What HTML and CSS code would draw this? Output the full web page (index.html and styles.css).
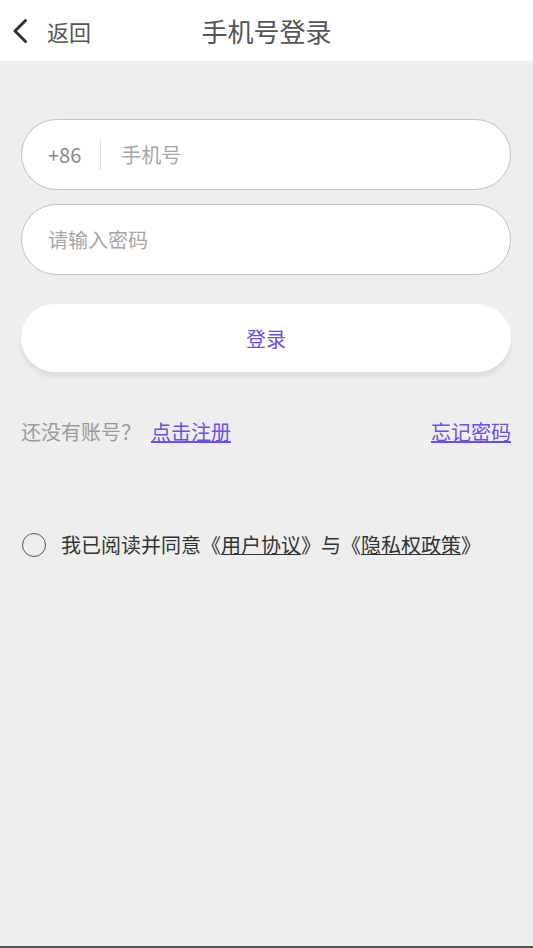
FILE: index.html
```html
<!DOCTYPE html>
<html lang="zh-CN">
<head>
    <meta charset="UTF-8">
    <meta name="viewport" content="width=device-width, initial-scale=1.0">
    <title>手机号登录</title>
    <link rel="stylesheet" href="styles.css">
</head>
<body>
<div class="topbar">
    <div class="back">
        <svg class="chevron" width="18" height="26" viewBox="0 0 18 26">
            <path d="M14.5 2.5 L4 13 L14.5 23.5" fill="none" stroke="#333" stroke-width="3" stroke-linecap="round" stroke-linejoin="round"/>
        </svg>
        <span>返回</span>
    </div>
    <div class="title">手机号登录</div>
    <div></div>
</div>

<div class="content">
    <div class="field">
        <span class="prefix">+86</span>
        <span class="divider"></span>
        <span class="placeholder">手机号</span>
    </div>
    <div class="field field-pwd">
        <span class="placeholder">请输入密码</span>
    </div>

    <div class="login-btn">登录</div>

    <div class="links">
        <div>还没有账号？<a class="link reg">点击注册</a></div>
        <a class="link">忘记密码</a>
    </div>

    <div class="agree">
        <span class="radio"></span>
        <span>我已阅读并同意《<u>用户协议</u>》与《<u>隐私权政策</u>》</span>
    </div>
</div>
</body>
</html>
```

FILE: styles.css
```css
html, body {
    margin: 0;
    padding: 0;
    height: 100%;
}
body {
    background-color: #eeeeee;
    font-family: "Noto Sans CJK SC", "Noto Sans", sans-serif;
    box-sizing: border-box;
    min-height: 100vh;
    border-bottom: 2px solid #555;
}

.topbar {
    height: 61px;
    background-color: #fff;
    display: grid;
    grid-template-columns: 1fr auto 1fr;
    align-items: center;
}
.back {
    display: flex;
    align-items: center;
    padding-left: 11px;
    color: #555;
    font-size: 22px;
}
.chevron {
    margin-right: 18px;
}
.title {
    font-size: 26px;
    color: #555;
}

.content {
    padding: 58px 22px 0 21px;
}
.field {
    height: 71px;
    box-sizing: border-box;
    border: 1px solid #c2c2c2;
    border-radius: 36px;
    background-color: #fff;
    display: flex;
    align-items: center;
    padding-left: 26px;
    font-size: 20px;
}
.field-pwd {
    margin-top: 14px;
}
.prefix {
    color: #8a8a8a;
}
.divider {
    width: 1px;
    height: 30px;
    background-color: #ddd;
    margin: 0 20px 0 19px;
}
.placeholder {
    color: #a6a6a6;
}

.login-btn {
    margin-top: 29px;
    height: 68px;
    border-radius: 34px;
    background-color: #fff;
    box-shadow: 0 5px 4px rgba(0, 0, 0, 0.07);
    display: flex;
    align-items: center;
    justify-content: center;
    color: #6a4ef0;
    font-size: 20px;
}

.links {
    margin-top: 45px;
    display: flex;
    justify-content: space-between;
    align-items: center;
    font-size: 20px;
    color: #9a9a9a;
}
.link {
    color: #6a4ef0;
    text-decoration: underline;
}
.reg {
    margin-left: 10px;
}

.agree {
    margin-top: 84px;
    display: flex;
    align-items: center;
    font-size: 20px;
    color: #333;
}
.radio {
    width: 24px;
    height: 24px;
    box-sizing: border-box;
    border: 1.5px solid #555;
    border-radius: 50%;
    margin: 0 15px 0 1px;
}
.agree u {
    text-decoration-thickness: 1px;
}
```
